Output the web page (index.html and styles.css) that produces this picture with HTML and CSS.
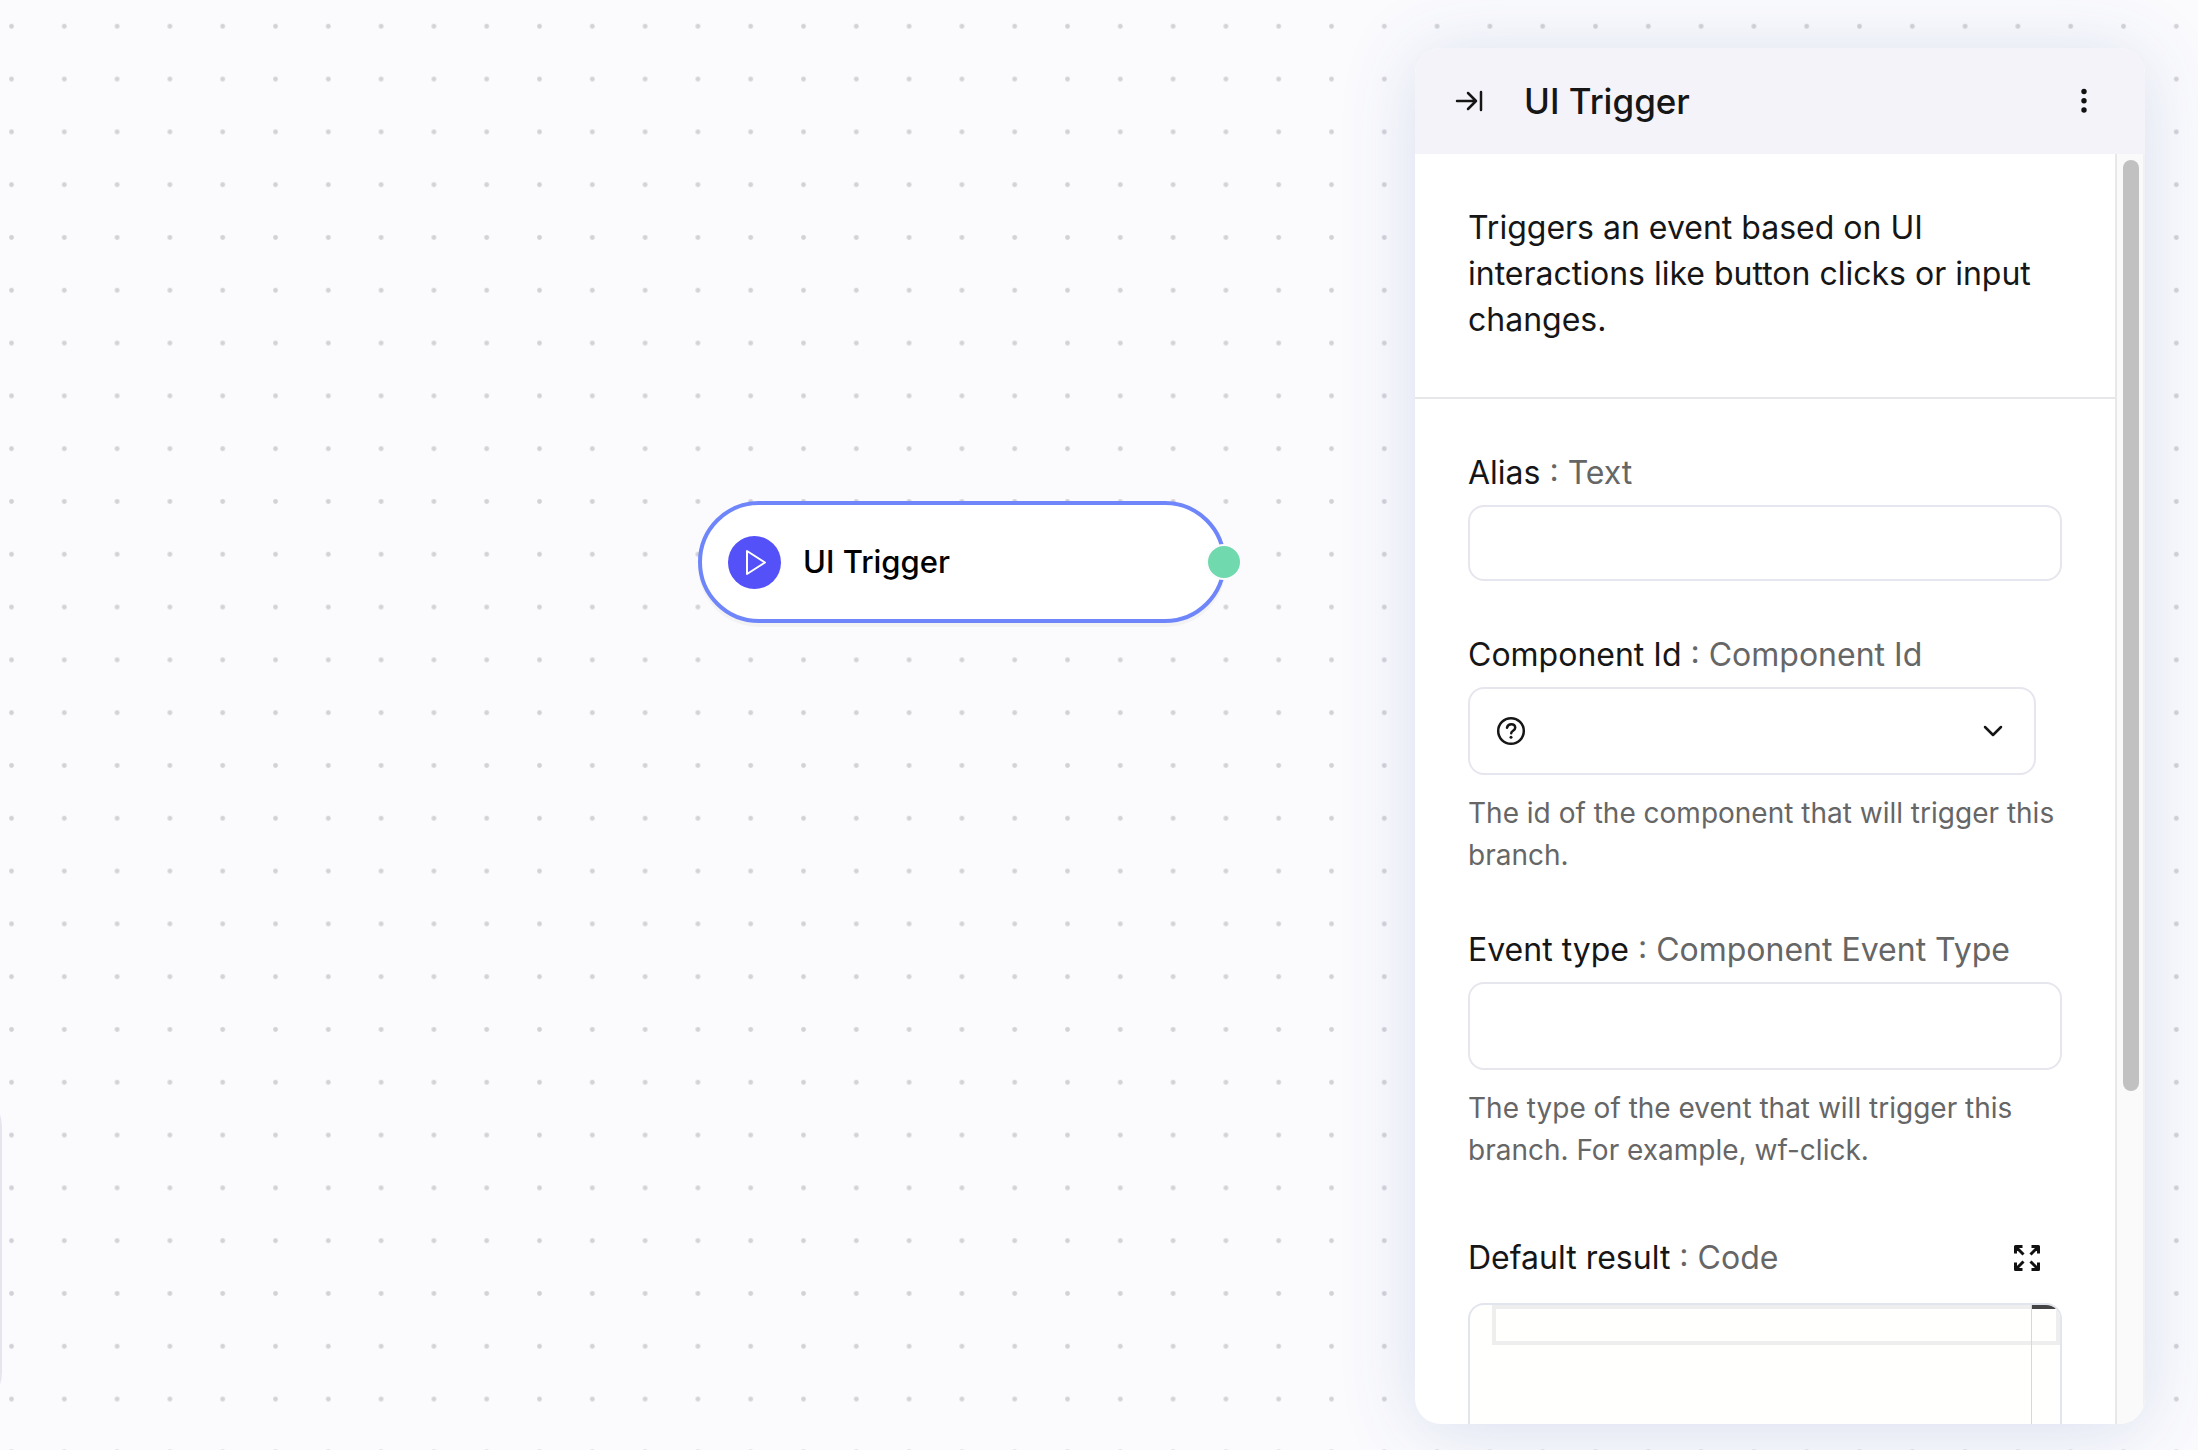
FILE: index.html
```html
<!DOCTYPE html>
<html lang="en">

<head>
    <meta charset="UTF-8">
    <meta name="viewport" content="width=device-width, initial-scale=1.0">
    <title>UI Trigger</title>
    <link rel="stylesheet" href="styles.css">
</head>

<body>

    <main class="canvas">

        <!-- dotted grid, 20 units zoomed by 2.64 -->
        <svg class="grid" aria-hidden="true">
            <pattern id="dots" width="20" height="20" patternUnits="userSpaceOnUse" patternTransform="translate(-14.9 -0.1) scale(2.64)">
                <circle cx="10" cy="10" r="0.92" fill="#d3d3d7" />
            </pattern>
            <rect width="100%" height="100%" fill="url(#dots)" />
        </svg>

        <div class="toolbox"></div>

        <div class="node">
            <span class="node-icon">
                <svg width="53" height="53" viewBox="0 0 53 53" fill="none" stroke="#fff" stroke-width="2" stroke-linejoin="round">
                    <path d="M19 15v23l18-11.500z" />
                </svg>
            </span>
            <span class="node-title">UI Trigger</span>
            <span class="handle"></span>
        </div>

        <aside class="panel">
            <header class="panel-header">
                <button class="icon-btn" type="button" aria-label="Collapse panel">
                    <svg width="28" height="28" viewBox="0 0 28 28" fill="none" stroke="#161616" stroke-width="2.500" stroke-linecap="round" stroke-linejoin="round">
                        <path d="M2 14h19M13 6l8 8-8 8M26 5v18" />
                    </svg>
                </button>
                <h1>UI Trigger</h1>
                <button class="icon-btn" type="button" aria-label="More">
                    <svg width="28" height="28" viewBox="0 0 28 28" fill="#111">
                        <circle cx="14" cy="4.500" r="2.700" />
                        <circle cx="14" cy="13.700" r="2.700" />
                        <circle cx="14" cy="23" r="2.700" />
                    </svg>
                </button>
            </header>

            <div class="panel-body">
                <div class="content">
                    <p class="description">Triggers an event based on UI interactions like button clicks or input changes.</p>

                    <form class="form">
                        <div class="field">
                            <label for="alias">Alias <span>: Text</span></label>
                            <input id="alias" type="text">
                        </div>

                        <div class="field">
                            <label for="component">Component Id <span>: Component Id</span></label>
                            <div class="select">
                                <select id="component">
                                    <option></option>
                                </select>
                                <svg class="help-icon" width="30" height="30" viewBox="0 0 30 30" fill="none" stroke="#161616" stroke-width="2.500" stroke-linecap="round">
                                    <circle cx="15" cy="15" r="12.800" />
                                    <path d="M11 11.800c.4-2.300 2-3.600 4.200-3.600 2.300 0 4 1.400 4 3.500 0 3-4 3-4 5.500" />
                                    <circle cx="15" cy="21.300" r="1.500" fill="#161616" stroke="none" />
                                </svg>
                                <svg class="chevron" width="20" height="20" viewBox="0 0 20 20" fill="none" stroke="#161616" stroke-width="2.500" stroke-linecap="round" stroke-linejoin="round">
                                    <path d="M2 6l8 8 8-8" />
                                </svg>
                            </div>
                            <p class="hint">The id of the component that will trigger this branch.</p>
                        </div>

                        <div class="field">
                            <label for="event">Event type <span>: Component Event Type</span></label>
                            <input id="event" class="tall" type="text">
                            <p class="hint">The type of the event that will trigger this branch. For example, wf-click.</p>
                        </div>

                        <div class="field">
                            <div class="label-row">
                                <label for="code">Default result <span>: Code</span></label>
                                <button class="expand" type="button" aria-label="Expand editor">
                                    <svg width="28" height="28" viewBox="0 0 28 28" fill="none" stroke="#111" stroke-width="3" stroke-linejoin="round">
                                        <path d="M2.500 9.500v-7h7M2.500 2.500l8 8M18.500 2.500h7v7M25.500 2.500l-8 8M2.500 18.500v7h7M2.500 25.500l8-8M25.500 18.500v7h-7M25.500 25.500l-8-8" />
                                    </svg>
                                </button>
                            </div>
                            <div class="editor">
                                <textarea id="code" rows="1" spellcheck="false"></textarea>
                                <div class="ruler"></div>
                            </div>
                        </div>
                    </form>
                </div>

                <div class="track">
                    <div class="thumb"></div>
                </div>
            </div>
        </aside>

    </main>

</body>

</html>
```
FILE: styles.css
```css
* {
    margin: 0;
    padding: 0;
    box-sizing: border-box;
}

body {
    font-family: Inter, "Liberation Sans", sans-serif;
    font-size: 32px;
    line-height: 46px;
    color: #161616;
    background-color: #fbfbfe;
}

button {
    border: none;
    background: none;
    cursor: pointer;
}

svg {
    display: block;
}

.canvas {
    position: relative;
    display: flex;
    justify-content: flex-end;
    height: 100vh;
    padding: 48px 53px 26px;
    overflow: hidden;
}

.grid {
    position: absolute;
    top: 0;
    left: 0;
    width: 100%;
    height: 100%;
}

/* mostly off the left edge */
.toolbox {
    position: absolute;
    top: 1087px;
    left: -98px;
    width: 100px;
    height: 325px;
    border: 2px solid #e6e5ee;
    border-radius: 40px;
    background-color: #fff;
}

/* node */
.node {
    position: absolute;
    top: 501px;
    left: 698px;
    display: flex;
    align-items: center;
    gap: 22px;
    width: 528px;
    height: 122px;
    padding: 0 26px;
    border: 4px solid #6f86fa;
    border-radius: 61px;
    background-color: #fff;
    box-shadow: 0 4px 0 #f3f3f4;
}

.node-icon {
    width: 53px;
    height: 53px;
    border-radius: 50%;
    background-color: #5451f8;
}

.node-title {
    color: #000;
    font-size: 31px;
    font-weight: 500;
}

.handle {
    position: absolute;
    top: 39px;
    right: -20px;
    width: 36px;
    height: 36px;
    border: 2px solid #fbfbfe;
    border-radius: 50%;
    background-color: #71d9ae;
}

/* panel */
.panel {
    position: relative;
    display: flex;
    flex-direction: column;
    width: 730px;
    border-radius: 26px;
    background-color: #fff;
    box-shadow: 0 6px 76px rgba(50, 84, 154, .17);
    overflow: hidden;
}

.panel-header {
    display: flex;
    align-items: center;
    flex: none;
    height: 106px;
    padding: 0 40px 0 33px;
    background-color: #f4f3f9;
}

.panel-header h1 {
    flex: 1;
    padding-left: 34px;
    font-size: 35px;
    font-weight: 500;
}

.icon-btn {
    padding: 0 7px;
}

.panel-body {
    display: flex;
    flex: 1;
    min-height: 0;
}

.content {
    flex: 1;
    overflow: hidden;
}

.description {
    padding: 51px 53px 54px;
    border-bottom: 2px solid #e7e7e9;
}

.form {
    display: flex;
    flex-direction: column;
    gap: 51px;
    padding: 51px 53px;
}

label {
    display: block;
    margin-bottom: 9px;
}

label span {
    color: #666;
}

input,
select {
    display: block;
    width: 100%;
    height: 76px;
    padding: 0 24px;
    border: 2px solid #e6e6ee;
    border-radius: 16px;
    outline: none;
    background-color: #fff;
    color: #161616;
    font: inherit;
}

.tall,
select {
    height: 88px;
}

.select {
    position: relative;
    margin-right: 26px;
}

select {
    padding: 0 72px;
    appearance: none;
}

.help-icon,
.chevron {
    position: absolute;
    top: 29px;
    left: 28px;
    pointer-events: none;
}

.chevron {
    top: 34px;
    left: auto;
    right: 33px;
}

.hint {
    margin-top: 17px;
    color: #666;
    font-size: 28px;
    line-height: 42px;
}

.label-row {
    display: flex;
    align-items: center;
    justify-content: space-between;
    margin-bottom: 9px;
}

.label-row label {
    margin-bottom: 0;
}

.expand {
    width: 70px;
    height: 72px;
    padding: 22px 21px;
}

.editor {
    position: relative;
    height: 400px;
    padding-left: 22px;
    border: 2px solid #e3e5ee;
    border-radius: 16px;
    background-color: #fffffd;
    overflow: hidden;
}

.editor textarea {
    display: block;
    width: 100%;
    height: 40px;
    border: 4px solid #eee;
    outline: none;
    background-color: #fffffd;
    font: 28px/32px "Liberation Mono", monospace;
    resize: none;
    overflow: hidden;
}

.ruler {
    position: absolute;
    top: 0;
    right: 0;
    width: 29px;
    height: 100%;
    border-left: 1px solid #d8d8d8;
    pointer-events: none;
}

.ruler::before {
    content: '';
    display: block;
    height: 4px;
    background-color: #444;
}

/* scrollbar */
.track {
    flex: none;
    width: 30px;
    padding: 6px;
    border-left: 2px solid #e8e8e8;
    border-right: 2px solid #f1f1f4;
    background-color: #fafafa;
}

.thumb {
    width: 16px;
    height: 74%;
    border-radius: 8px;
    background-color: #c1c1c1;
}
```
